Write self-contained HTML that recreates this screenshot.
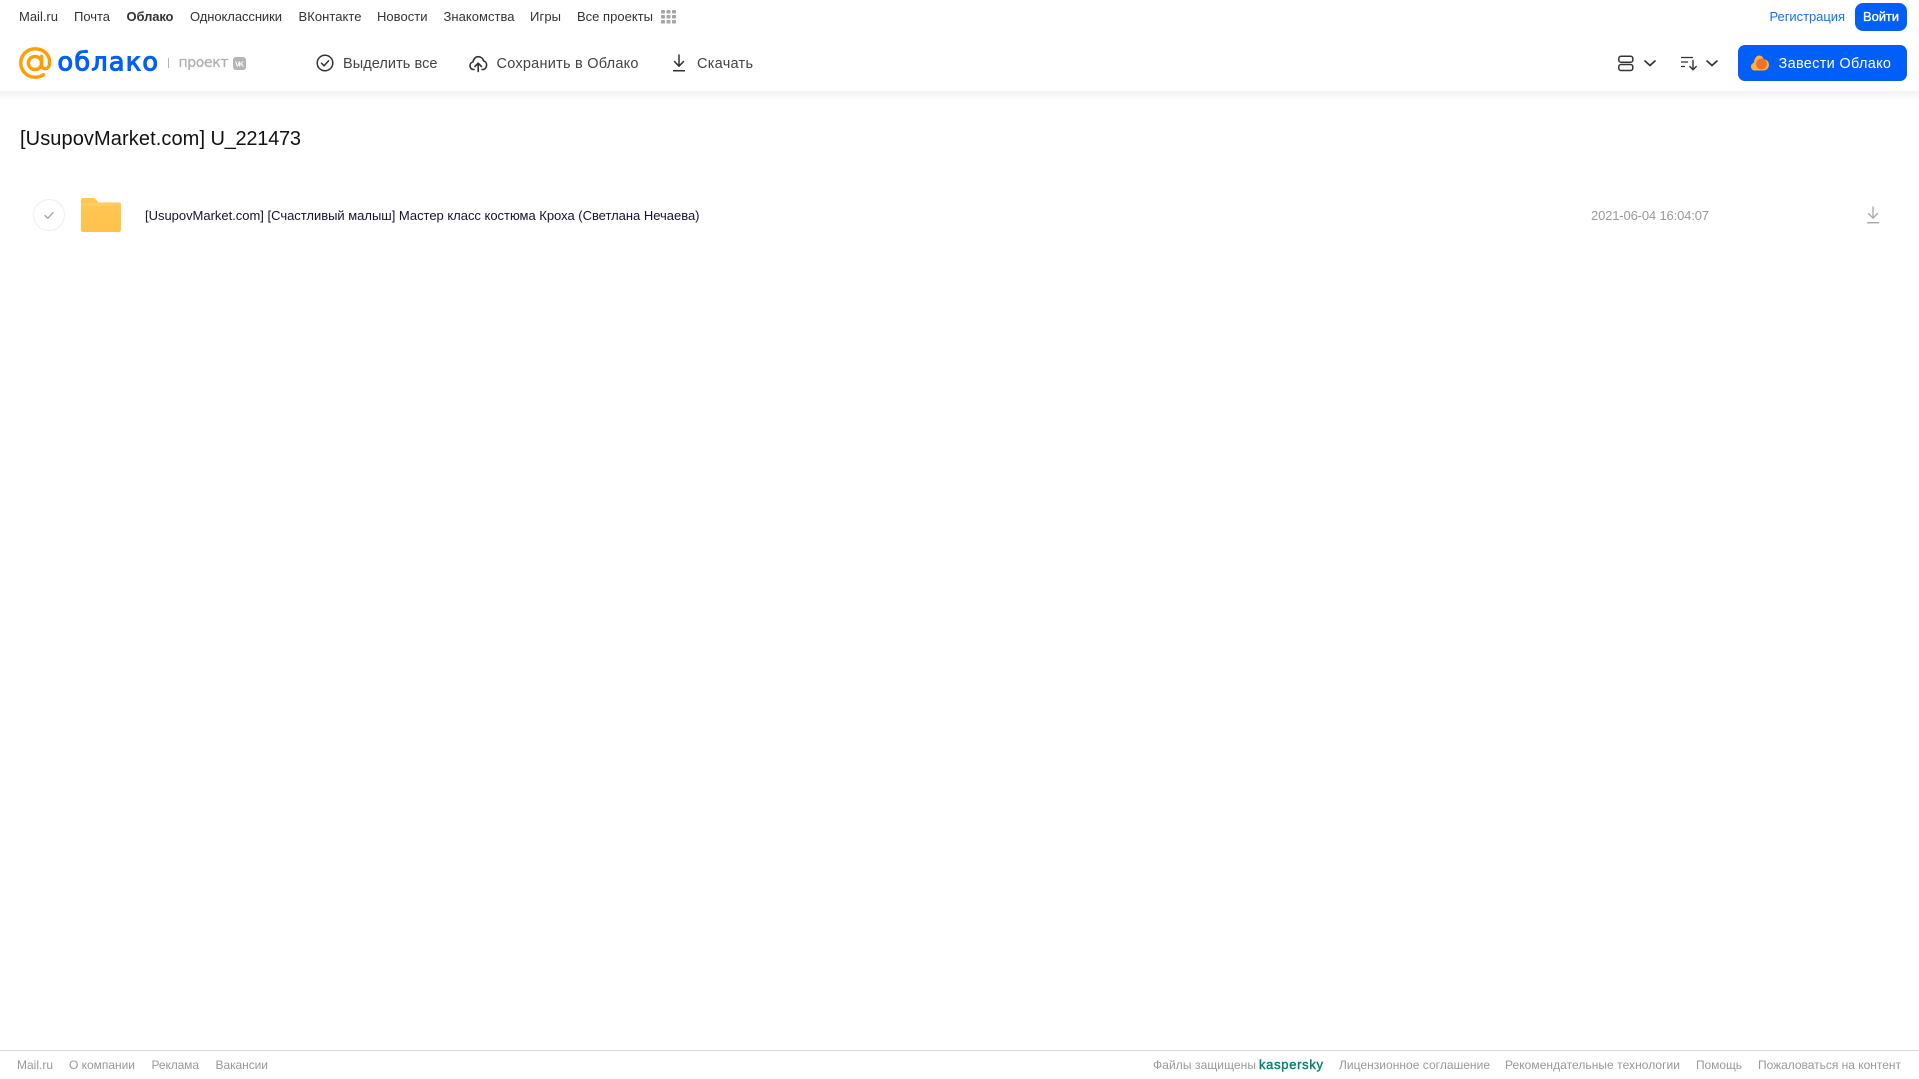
<!DOCTYPE html>
<html lang="ru">
<head>
<meta charset="utf-8">
<title>[UsupovMarket.com] U_221473</title>
<style>
html,body{margin:0;padding:0;background:#fff;width:1919px;height:1079px;overflow:hidden}
svg{display:block;position:absolute;left:0;top:0}
text{font-family:"Liberation Sans","Noto Sans CJK SC",sans-serif;white-space:pre}
.n{font-size:13px;fill:#333}
.t{font-size:14.5px;fill:#444}
.f{font-size:12px;fill:#999}
</style>
</head>
<body>
<svg width="1919" height="1079" viewBox="0 0 1919 1079" xmlns="http://www.w3.org/2000/svg">
<defs>
<linearGradient id="sh" x1="0" y1="0" x2="0" y2="1"><stop offset="0" stop-color="#f3f3f3"/><stop offset="1" stop-color="#fff"/></linearGradient>
<linearGradient id="fo" x1="0" y1="0" x2="0" y2="1"><stop offset="0" stop-color="#ffc757"/><stop offset="1" stop-color="#ffc24a"/></linearGradient>
</defs>
<rect x="0" y="91" width="1919" height="10" fill="url(#sh)"/>

<!-- top nav -->
<text class="n" x="19" y="21" textLength="39">Mail.ru</text>
<text class="n" x="74" y="21" textLength="36">Почта</text>
<text class="n" x="126.500" y="21" textLength="47" font-weight="700">Облако</text>
<text class="n" x="190" y="21" textLength="92">Одноклассники</text>
<text class="n" x="298.500" y="21" textLength="63">ВКонтакте</text>
<text class="n" x="377" y="21" textLength="50.500">Новости</text>
<text class="n" x="443.500" y="21" textLength="71">Знакомства</text>
<text class="n" x="530" y="21" textLength="31">Игры</text>
<text class="n" x="577" y="21" textLength="76">Все проекты</text>
<g fill="#a6a6a6">
<rect x="661" y="10" width="4" height="3.500" rx=".8"/><rect x="666.500" y="10" width="4" height="3.500" rx=".8"/><rect x="672" y="10" width="4" height="3.500" rx=".8"/>
<rect x="661" y="15" width="4" height="3.500" rx=".8"/><rect x="666.500" y="15" width="4" height="3.500" rx=".8"/><rect x="672" y="15" width="4" height="3.500" rx=".8"/>
<rect x="661" y="20" width="4" height="3.500" rx=".8"/><rect x="666.500" y="20" width="4" height="3.500" rx=".8"/><rect x="672" y="20" width="4" height="3.500" rx=".8"/>
</g>
<text class="n" x="1769.500" y="21" textLength="75.500" style="fill:#1a6ff0">Регистрация</text>
<rect x="1855" y="3" width="52" height="28" rx="8" fill="#005ff9"/>
<text x="1863" y="21" font-size="13" fill="#fff" stroke="#fff" stroke-width=".35" textLength="36">Войти</text>

<!-- logo -->
<g fill="none" stroke="#ff9e00" stroke-width="3.400" stroke-linecap="round">
<circle cx="35" cy="63" r="6.600"/>
<path d="M41.600 56.500v8.200c0 5.600 7.800 5.600 8-1.700C49.900 54 43 48.800 35 48.800C27.200 48.800 20.800 55.200 20.800 63C20.800 70.800 27.200 77.200 35 77.200C38.300 77.200 41 76.400 43.500 74.800"/>
</g>
<text x="57.500" y="70.500" font-size="25.500" fill="#005ff9" stroke="#005ff9" stroke-width="1.100" textLength="100.500" style="font-family:'DejaVu Sans',sans-serif">облако</text>
<rect x="168" y="58" width="1" height="10" fill="#b5b5b5"/>
<text x="178.500" y="67" font-size="14" fill="#b0b0b0" stroke="#b0b0b0" stroke-width=".3" textLength="50" style="font-family:'DejaVu Sans',sans-serif">проект</text>
<rect x="233" y="57" width="13" height="13" rx="3" fill="#b5b5b5"/>
<text x="235" y="66.500" font-size="7.500" font-weight="700" fill="#fff" textLength="9">VK</text>

<!-- toolbar -->
<circle cx="325" cy="63" r="7.800" fill="none" stroke="#333" stroke-width="1.500"/>
<path d="M321.500 63.200l2.600 2.600 4.500-5" fill="none" stroke="#333" stroke-width="1.500" stroke-linecap="round" stroke-linejoin="round"/>
<text class="t" x="343" y="68" textLength="94.500">Выделить все</text>

<path d="M474 69.500h-.5c-2.200 0-3.500-1.900-3.500-3.800 0-1.900 1.300-3.400 3-3.800.4-3.100 2.700-5.200 5.300-5.200 2.700 0 4.700 1.900 5.300 4.300 1.700.3 3 1.800 3 3.900 0 2.400-1.500 4.600-4 4.600h-.6" fill="none" stroke="#333" stroke-width="1.600" stroke-linejoin="round" stroke-linecap="round"/>
<path d="M478.200 71.500v-8M474.900 66.500l3.300-3.300 3.300 3.300" fill="none" stroke="#333" stroke-width="1.600" stroke-linecap="round" stroke-linejoin="round"/>
<text class="t" x="496.500" y="68" textLength="142">Сохранить в Облако</text>

<path d="M679 55v11M674.500 61.500l4.500 4.700 4.500-4.700" fill="none" stroke="#333" stroke-width="1.500" stroke-linecap="round" stroke-linejoin="round"/>
<rect x="673" y="70" width="12" height="1.500" fill="#333"/>
<text class="t" x="697" y="68" textLength="56">Скачать</text>

<!-- right toolbar -->
<rect x="1618.800" y="56.300" width="14" height="6" rx="2.200" fill="none" stroke="#333" stroke-width="1.500"/>
<rect x="1618.800" y="64.500" width="14" height="6" rx="2.200" fill="none" stroke="#333" stroke-width="1.500"/>
<path d="M1645 61l5 4.500 5-4.500" fill="none" stroke="#333" stroke-width="1.700" stroke-linecap="round" stroke-linejoin="round"/>
<path d="M1681 57.500h12M1681 62h7M1681 66.500h4" fill="none" stroke="#333" stroke-width="1.300"/>
<path d="M1693 60.500v9M1689.800 66.500l3.200 3.200 3.200-3.200" fill="none" stroke="#333" stroke-width="1.400" stroke-linecap="round" stroke-linejoin="round"/>
<path d="M1707 61l5 4.500 5-4.500" fill="none" stroke="#333" stroke-width="1.700" stroke-linecap="round" stroke-linejoin="round"/>

<rect x="1738" y="45" width="169" height="36" rx="7" fill="#005ff9"/>
<path d="M1755 70.500c-2.500 0-4-1.800-4-3.900 0-1.900 1.200-3.300 2.800-3.700.3-3.500 2.300-7.400 5.300-7.400 2.300 0 3.900 1.700 4.600 3.700 2.900.2 5.300 2.400 5.300 5.500 0 3.300-2.600 5.800-5.800 5.800z" fill="#ffb13d"/>
<circle cx="1761.500" cy="64" r="5.400" fill="#f0702a"/>
<text x="1778.500" y="68" font-size="14.500" fill="#fff" textLength="112.500">Завести Облако</text>

<!-- title -->
<text x="20" y="145" font-size="20" fill="#111" textLength="185">[UsupovMarket.com]</text>
<text x="210.500" y="145" font-size="20" fill="#111" textLength="90.500">U_221473</text>

<!-- row -->
<circle cx="49" cy="215" r="15.500" fill="#fff" stroke="#efefef" stroke-width="1"/>
<path d="M45 215.500l2.800 2.800 5.200-5.600" fill="none" stroke="#a0a0a0" stroke-width="1.300" stroke-linecap="round" stroke-linejoin="round"/>
<path d="M83 198h9.500c2 0 3 .6 4 2l2 2.500H119c1.100 0 2 .9 2 2v25.500c0 1.100-.9 2-2 2H83c-1.100 0-2-.9-2-2V200c0-1.100.9-2 2-2z" fill="url(#fo)"/>
<rect x="81" y="203" width="40" height="3" fill="#ffd06b" opacity=".6"/>
<text x="145" y="220" font-size="13" fill="#1a1030" textLength="554.500">[UsupovMarket.com] [Счастливый малыш] Мастер класс костюма Кроха (Светлана Нечаева)</text>
<text x="1591" y="220" font-size="13" fill="#999" textLength="118">2021-06-04 16:04:07</text>
<path d="M1873 207v11M1868.500 213.500l4.500 4.700 4.500-4.700" fill="none" stroke="#a8a8a8" stroke-width="1.300" stroke-linecap="round" stroke-linejoin="round"/>
<rect x="1867" y="222" width="12" height="1.400" fill="#a8a8a8"/>

<!-- footer -->
<rect x="0" y="1050" width="1919" height="1" fill="#d9d9d9"/>
<text class="f" x="17" y="1069" textLength="36">Mail.ru</text>
<text class="f" x="69" y="1069" textLength="66">О компании</text>
<text class="f" x="151.500" y="1069" textLength="47.500">Реклама</text>
<text class="f" x="215.500" y="1069" textLength="52.500">Вакансии</text>
<text class="f" x="1153" y="1069" textLength="103">Файлы защищены</text>
<text x="1259" y="1069" font-size="13" fill="#00806a" stroke="#00806a" stroke-width=".4" textLength="64">kaspersky</text>
<text class="f" x="1339" y="1069" textLength="151">Лицензионное соглашение</text>
<text class="f" x="1505" y="1069" textLength="175">Рекомендательные технологии</text>
<text class="f" x="1696" y="1069" textLength="46">Помощь</text>
<text class="f" x="1758" y="1069" textLength="143">Пожаловаться на контент</text>
</svg>
</body>
</html>
